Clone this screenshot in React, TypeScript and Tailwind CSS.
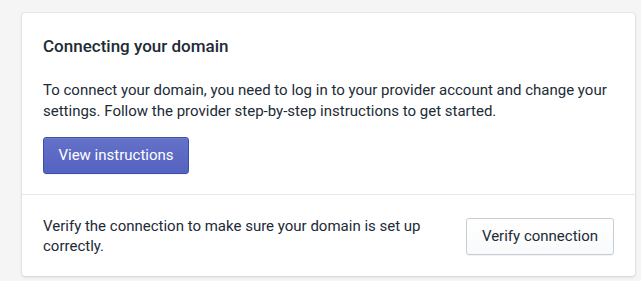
export default function App() {
  return (
    <div className="min-h-[281px] w-[641px] bg-[#f5f5f6] pt-[13px] pl-[22px] font-['Roboto','Liberation_Sans',sans-serif] text-[#212b36]">
      <div className="w-[613px] rounded-[3px] bg-white shadow-[0_0_0_1px_rgba(63,63,68,0.05),0_1px_3px_0_rgba(63,63,68,0.15)]">
        <div className="px-[21px] pt-[21px] pb-[20px]">
          <h2 className="text-[17px] leading-6 font-medium">Connecting your domain</h2>
          <p className="mt-[22px] text-[15px] leading-[21px]">
            To connect your domain, you need to log in to your provider account and change your
            settings. Follow the provider step-by-step instructions to get started.
          </p>
          <button className="mt-[15px] h-[37px] w-[146px] rounded-[3px] border border-[#3f4eae] bg-gradient-to-b from-[#6371c7] to-[#5563c1] text-[15px] text-white shadow-[inset_0_1px_0_0_#6f7bcb,0_1px_0_0_rgba(22,29,37,0.05)]">
            View instructions
          </button>
        </div>
        <div className="flex items-center justify-between border-t border-[#e6e8eb] px-[21px] pt-[21px] pb-[20px]">
          <p className="w-[400px] text-[15px] leading-[20px]">
            Verify the connection to make sure your domain is set up correctly.
          </p>
          <button className="h-[37px] w-[148px] rounded-[3px] border border-[#c4cdd5] bg-gradient-to-b from-white to-[#f9fafb] text-[15px] text-[#212b36] shadow-[0_1px_0_0_rgba(22,29,37,0.05)]">
            Verify connection
          </button>
        </div>
      </div>
    </div>
  )
}
